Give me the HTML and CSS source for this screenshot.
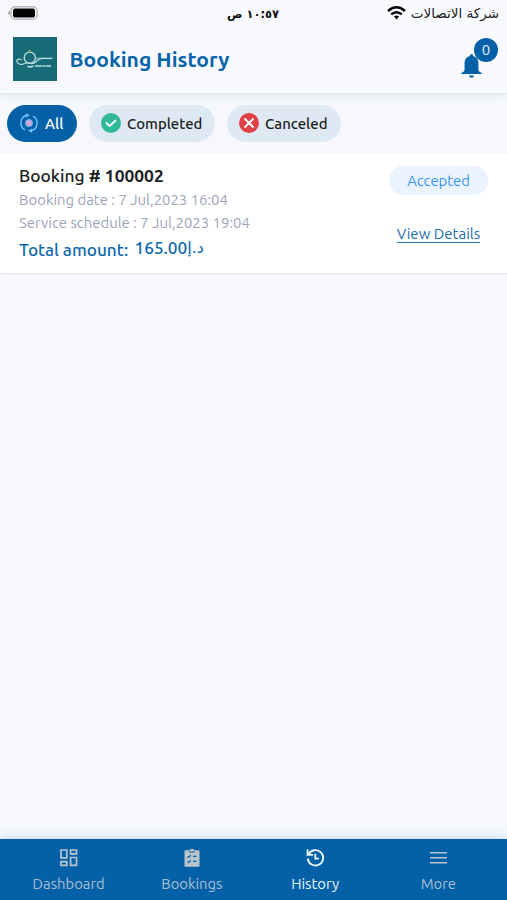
FILE: index.html
```html
<!DOCTYPE html>
<html lang="en">
<head>
<meta charset="utf-8">
<title>Booking History</title>
<link rel="stylesheet" href="styles.css">
</head>
<body>
<div class="app">
  <header class="top">
    <div class="status">
      <svg class="battery" width="31" height="14" viewBox="0 0 31 14"><path d="M3 5v4Q1 8.500 1 7t2-2z" fill="#aaa"/><rect x="4" y=".7" width="26" height="12.600" rx="4" fill="#fff" stroke="#b5b5b8" stroke-width="1.400"/><rect x="6" y="2.500" width="22" height="9" rx="2" fill="#000"/></svg>
      <span class="time" dir="rtl">١٠:٥٧ ص</span>
      <div class="carrier">
        <svg width="19" height="14" viewBox="0 0 19 14" fill="none" stroke="#050505" stroke-width="2.500"><path d="M1 5Q9.500-2.400 18 5"/><path d="M4.200 8.400q5.300-4.400 10.600 0"/><path d="M6.900 10.400 9.500 13.500l2.600-3.100q-2.600-1.900-5.200 0z" fill="#050505" stroke="none"/></svg>
        <span dir="rtl">شركة الاتصالات</span>
      </div>
    </div>
    <div class="bar">
      <svg class="logo" width="44" height="44" viewBox="0 0 44 44"><path fill="#176b77" d="M0 0h44v44H0z"/><g fill="none" stroke="#b9dfdf"><circle cx="16.800" cy="20.700" r="5.600" stroke-width="1.400"/><path d="M8.500 22.500C5 21.500 3.200 23 4 25s4.500 3.500 7.500 1.500q3-1.500 6 0c4 1 6-3 9.500-4.500 4-1.500 8 .5 12.500-1" stroke-width="1.200"/><path d="M22.500 21.500c6-1 10 .2 16-.5" stroke-width=".8"/><path d="M14.500 29.200q2 1.600 6-.2M22 29h16" stroke-width="1.700" stroke-dasharray="7 .5 3 .4"/></g><path d="m15 14.500 1.500-2.300 1.800 2.300zM7 22.500l2-.8v2z" fill="#b8a65c"/></svg>
      <h1>Booking History</h1>
      <div class="bell">
        <svg width="21" height="24" viewBox="0 0 20 24" preserveAspectRatio="none" fill="#0461a7"><path d="M10 0q1.600 0 1.600 2 5 1.300 5 7.500v6q0 2.300 3 3.300V20H.4v-1.200q3-1 3-3.300v-6Q3.400 3.300 8.400 2q0-2 1.600-2zM7.500 21.500h5Q12 23.700 10 23.700t-2.500-2.200z"/></svg>
        <span class="count">0</span>
      </div>
    </div>
  </header>
  <nav class="filters">
    <a class="chip all"><svg width="20" height="20" viewBox="0 0 20 20" fill="none" stroke="#6fbdf4" stroke-width="1.500"><path d="M7.500 2.300A8 8 0 0 0 6 16.900M12.500 17.700A8 8 0 0 0 14 3.100"/><path d="m7 .2 4 2.100-4 2.300zM13 15.400l-4 2.300 4 2.100z" fill="#6fbdf4" stroke="none"/><circle cx="10" cy="10" r="3.500" fill="#b8ace2" stroke="#82b7ed" stroke-width="1"/><circle cx="10" cy="10" r="1.800" fill="#e6a6c4" stroke="none"/></svg><span>All</span></a>
    <a class="chip completed"><svg width="20" height="20" viewBox="0 0 20 20"><circle cx="10" cy="10" r="10" fill="#32ba98"/><path d="m5 9.500 3.500 3.400 6.500-5.700" fill="none" stroke="#fff" stroke-width="2"/></svg><span>Completed</span></a>
    <a class="chip canceled"><svg width="20" height="20" viewBox="0 0 20 20"><circle cx="10" cy="10" r="10" fill="#e04046"/><path d="m5.500 5.500 9 9m0-9-9 9" fill="none" stroke="#fff" stroke-width="2"/></svg><span>Canceled</span></a>
  </nav>
  <main>
    <article class="card">
      <div class="info">
        <h2><span>Booking</span> <b># 100002</b></h2>
        <p class="date">Booking date : 7 Jul,2023 16:04</p>
        <p class="schedule">Service schedule : 7 Jul,2023 19:04</p>
        <div class="total"><span class="label">Total amount:</span><span class="price">165.00</span><span class="currency" dir="rtl">د.إ</span></div>
      </div>
      <div class="actions">
        <span class="badge">Accepted</span>
        <a class="details"><span>View Details</span></a>
      </div>
    </article>
  </main>
  <nav class="tabs">
    <a class="tab"><svg width="20" height="20" viewBox="0 0 20 20" fill="none" stroke="currentColor" stroke-width="1.700"><path d="M2 2h5.800v7.800H2zM11.600 2h5.900v3.800h-5.900zM2 13.600h5.800v3.700H2zM11.600 9.500h5.900v7.800h-5.900z"/></svg><span>Dashboard</span></a>
    <a class="tab"><svg width="20" height="20" viewBox="0 0 20 20"><path d="M3.500 2.300h4Q8 .7 10 .7t2.500 1.600h4q1 0 1 1v14.500q0 1-1 1h-13q-1 0-1-1V3.300q0-1 1-1z" fill="currentColor"/><path d="M7 4h6M5.500 8.300l1.200 1.200 2.200-2.300M11 8.300h3.500M5.500 13.300l1.200 1.200 2.200-2.300M11 13.300h3.500" fill="none" stroke="#0461a7" stroke-width="1.200"/></svg><span>Bookings</span></a>
    <a class="tab active"><svg width="20" height="20" viewBox="0 0 20 20" fill="none" stroke="currentColor" stroke-width="1.900"><path d="M3.500 6.500A7.700 7.700 0 1 1 2.800 10.600"/><path d="M2.600 1.500v5.400H8M10.300 5.800v4.800H14"/></svg><span>History</span></a>
    <a class="tab"><svg width="20" height="20" viewBox="0 0 20 20" stroke="currentColor" stroke-width="1.600"><path d="M2 4.700h17M2 9.700h17M2 14.700h17"/></svg><span>More</span></a>
  </nav>
</div>
</body>
</html>
```
FILE: styles.css
```css
* { box-sizing: border-box; }
body { margin: 0; font-family: Ubuntu, "Noto Sans", "DejaVu Sans", sans-serif; color: #1b1e22; }
h1, h2, p { margin: 0; }
svg { display: block; flex: none; }
span { white-space: nowrap; }
.app { height: 900px; display: flex; flex-direction: column; background: #f6f8fd; }
.top { height: 93px; background: #f8f9fe; box-shadow: 0 2px 7px #dce4ea; z-index: 1; }
.status { height: 27px; display: grid; grid-template-columns: 1fr 1fr 1fr; align-items: center; padding: 0 8px 0 7px; font-size: 13.500px; font-family: "DejaVu Sans", sans-serif; line-height: 20px; }
.battery { margin-top: -1px; }
.time { text-align: center; font-weight: 700; font-size: 11.500px; color: #111; }
.carrier { display: flex; justify-content: flex-end; align-items: center; gap: 5px; }
.carrier svg { margin-top: -2px; }
.carrier span { margin-top: -1px; }
.bar { height: 66px; display: flex; align-items: center; padding: 0 9px 2px 13px; }
h1 { flex: 1; margin-left: 12.500px; font-size: 21.100px; line-height: 28px; color: #0864a9; }
.bell { position: relative; width: 37px; height: 40px; padding-top: 15px; }
.count { position: absolute; right: 0; top: -1px; width: 24px; height: 24px; border-radius: 50%; background: #0461a7; color: #e4f3ff; text-align: center; font-size: 15px; line-height: 24px; }
.filters { height: 61px; display: flex; gap: 12px; padding: 12px 7px; }
.chip { height: 37px; display: flex; align-items: center; gap: 6px; padding: 0 0 1px 12px; border-radius: 19px; background: #dfe9f3; font-size: 14.900px; font-weight: 500; }
.all { width: 70px; background: #0461a7; color: #fff; }
.completed { width: 126px; }
.canceled { width: 114px; }
main { flex: 1; }
.card { height: 119px; display: flex; justify-content: space-between; padding: 10px 19px 0; background: #fff; box-shadow: 0 1px 2px #dce0e7; }
h2 { font-size: 17.400px; line-height: 24px; font-weight: 500; }
.date, .schedule { font-size: 14.900px; line-height: 23px; color: #9ca4b8; white-space: nowrap; }
.total { display: flex; align-items: center; margin-top: 1px; font-size: 17.200px; font-weight: 500; line-height: 30px; color: #0e68ac; }
.label { width: 115.500px; }
.price, .currency { margin-top: -4px; }
.currency { font-family: "DejaVu Sans", sans-serif; font-weight: 400; font-size: 16px; }
.actions { width: 99px; display: flex; flex-direction: column; align-items: center; padding-top: 2px; }
.badge { width: 99px; height: 29px; border-radius: 15px; background: #eaf3fe; color: #3995f6; font-size: 14.800px; line-height: 29px; text-align: center; }
.details { margin-top: 30px; height: 18px; border-bottom: 1px solid #2873ad; font-size: 15px; line-height: 18px; color: #1c6dab; }
.tabs { height: 61px; display: grid; grid-template-columns: repeat(4, 1fr); padding: 0 7px; background: #0461a7; box-shadow: 0 -2px 9px #cbdcf1; }
.tab { display: flex; flex-direction: column; align-items: center; padding-top: 9px; gap: 7px; color: #a9bfd3; font-size: 14.800px; line-height: 18px; }
.tab svg { color: #bac4cd; }
.tab.active, .tab.active svg { color: #e9f7ff; }
```
